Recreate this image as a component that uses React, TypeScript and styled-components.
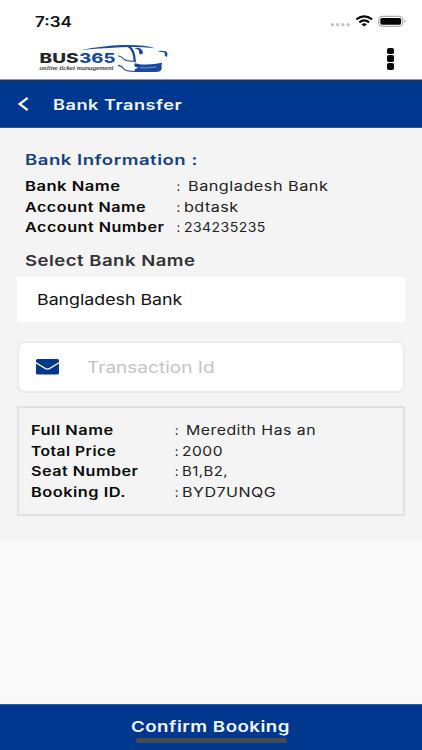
import React from "react";
import styled, { createGlobalStyle } from "styled-components";

const Global = createGlobalStyle`
  * { box-sizing: border-box; }
  body { margin: 0; background: #f9f9f9; font-family: Inter, "Open Sans", sans-serif; }
`;

const Screen = styled.div`
  width: 422px;
  height: 750px;
  display: flex;
  flex-direction: column;
  overflow: hidden;
  background: #f9f9f9;
`;

/* Extended letterforms: glyphs are widened horizontally from their left edge. */
const Wide = styled.span<{ $x: number; $ls?: number }>`
  display: inline-block;
  white-space: pre;
  letter-spacing: ${(p) => p.$ls ?? 0.4}px;
  transform: scaleX(${(p) => p.$x});
  transform-origin: 0 50%;
`;

const StatusBar = styled.div`
  height: 42px;
  flex: none;
  display: flex;
  justify-content: space-between;
  background: #fff;
  padding: 0 6px 0 34.5px;
`;
const Clock = styled.div`
  padding-top: 11.5px;
  font-size: 14px;
  line-height: 20px;
  font-weight: 600;
  color: #111;
`;
const Header = styled.header`
  height: 38px;
  flex: none;
  display: flex;
  justify-content: space-between;
  background: #fff;
  border-bottom: 1px solid #96989f;
  padding: 0 28px 0 38px;
`;
const MenuButton = styled.div`
  display: flex;
  flex-direction: column;
  gap: 1.6px;
  padding-top: 5.5px;
`;
const MenuDot = styled.i`
  width: 7.5px;
  height: 6.4px;
  border-radius: 1.8px;
  background: #080808;
`;
const TitleBar = styled.div`
  height: 48px;
  flex: none;
  display: flex;
  align-items: center;
  background: #003890;
  border-top: 1px solid #29303f;
  border-bottom: 1px solid #2d5294;
  color: #f4f6fa;
  padding-left: 17px;
  font-size: 14.3px;
  font-weight: 600;
`;
const BackIcon = styled.svg`
  width: 12px;
  height: 16px;
  margin-right: 24px;
`;
const Content = styled.main`
  height: 411px;
  flex: none;
  background: #f4f4f4;
  padding: 21px 17px 0;
`;
const SectionTitle = styled.h2`
  margin: 0 0 5px 8px;
  font-size: 14.5px;
  line-height: 22px;
  font-weight: 600;
  color: #153f88;
`;
const Details = styled.dl<{ $inset: number; $labels: number }>`
  margin: 0;
  padding-left: ${(p) => p.$inset}px;
  display: grid;
  grid-template-columns: ${(p) => p.$labels}px 1fr;
  grid-auto-rows: 20.6px;
  font-size: 13px;
  line-height: 20.6px;
`;
const Label = styled.dt`
  font-weight: 600;
  color: #090909;
`;
const Value = styled.dd`
  margin: 0;
  display: flex;
  color: #222;
`;
const Colon = styled.span<{ $gap: number }>`
  width: ${(p) => p.$gap}px;
  flex: none;
`;
const SelectTitle = styled.h3`
  margin: 12.7px 0 5px 8px;
  font-size: 15px;
  line-height: 22px;
  font-weight: 600;
  color: #333;
`;
const SelectBox = styled.div`
  height: 45px;
  display: flex;
  align-items: center;
  padding-left: 20px;
  background: #fff;
  font-size: 15px;
  color: #111;
`;
const InputBox = styled.div`
  height: 52px;
  margin: 18.5px 0 13.5px;
  display: flex;
  align-items: center;
  padding-left: 17px;
  border: 2px solid #ebebeb;
  border-radius: 8px;
  background: #fff;
  font-size: 16px;
  color: #c4c4c6;
`;
const MailIcon = styled.svg`
  width: 23px;
  height: 15.5px;
  margin-right: 28px;
`;
const Summary = styled.section`
  height: 109.5px;
  padding-top: 11.5px;
  border: 2px solid #e1e1e1;
`;
const Footer = styled.footer`
  height: 46px;
  flex: none;
  margin-top: auto;
  display: flex;
  flex-direction: column;
  background: #003890;
  border-top: 1px solid #2d5a9f;
  padding: 12px 0 0 131px;
  font-size: 15px;
  line-height: 20px;
  font-weight: 600;
  color: #f4f7fb;
`;
const HomeIndicator = styled.div`
  width: 151px;
  height: 4.5px;
  margin: 1px 0 0 5px;
  border-radius: 3px;
  background: #4a4a4d;
`;

const StatusIcons = () => (
  <svg width="90" height="42" viewBox="326 0 90 42">
    <g fill="#c5c5c5">
      <circle cx="332.5" cy="24.8" r="1.7" />
      <circle cx="337.7" cy="24.8" r="1.7" />
      <circle cx="342.9" cy="24.8" r="1.7" />
      <circle cx="348.1" cy="24.8" r="1.7" />
    </g>
    <g fill="none" stroke="#080808" strokeWidth="2.1">
      <path d="M356.3 19.3 Q364.2 13.5 372.1 19.3" />
      <path d="M359.3 22.3 Q364.2 18.6 369.1 22.3" />
    </g>
    <path d="M361.4 24.3 Q364.2 22.2 367 24.3 L364.2 26.6Z" fill="#080808" />
    <rect x="378.7" y="16.3" width="24" height="10" rx="3.2" fill="none" stroke="#999" />
    <rect x="380.3" y="17.9" width="20.8" height="6.9" rx="1.7" fill="#050505" />
    <path d="M404.4 19.6 Q406.5 21.3 404.4 23Z" fill="#999" />
  </svg>
);

const Logo = () => (
  <svg width="134" height="37" viewBox="38 42 134 37">
    <g fontFamily="Inter, sans-serif" fontWeight="800" fontSize="13.2">
      <text x="39.5" y="63" textLength="39" lengthAdjust="spacingAndGlyphs" fill="#242528">BUS</text>
      <text x="79.3" y="63" textLength="36" lengthAdjust="spacingAndGlyphs" fill="#174a9e">365</text>
    </g>
    <text x="39.5" y="69.8" textLength="74" lengthAdjust="spacingAndGlyphs" fontFamily="Liberation Serif, serif" fontStyle="italic" fontSize="6.2" fill="#33343a" stroke="#33343a" strokeWidth="0.15">
      online ticket management
    </text>
    <g fill="#174a9e">
      <path d="M81 50 Q103 45.8 122 45 Q144 44.4 155 48.2 Q141 46.8 131 47 Q112 47.4 81 50Z" />
      <path d="M126.5 46 L130.5 46.5 Q135 49.5 135.8 60 L136 62.5 L133.6 61.5 Q133.6 50.5 126.5 46Z" />
      <path d="M135 48 Q142.5 47 143 53.4 L140 54.6 Q138.6 53 139 50.4 Q138 49 135 48.6Z" />
      <path d="M158.5 51 Q166 50 167.5 53.2 L167 57 L164.8 55.8 V52.8 Q163 51.8 158.5 51.8Z" />
      <path d="M134.5 63.2 L141 64.4 Q152 65.2 162 62.8 L161.4 66.6 L162 67.6 L160.6 71 Q159 72 155 72 H135 L134.6 69.2 L138.5 67.8 L134.5 66.4Z" />
    </g>
    <path d="M140 67.8 Q149 68.2 156.5 66.9" fill="none" stroke="#9db6da" strokeWidth="0.7" />
    <g fill="none" stroke="#174a9e" strokeWidth="1.1">
      <path d="M118 55.8 Q121.5 56.3 123.8 59.2 Q126 61.2 133.8 61.4" />
      <path d="M118 65.4 Q122 65.8 123.6 68.8 Q125 71.4 135.5 71.5" />
    </g>
  </svg>
);

type Row = { label: string; lx: number; gap: number; value: string; vx: number };

const bankRows: Row[] = [
  { label: "Bank Name", lx: 1.275, gap: 11.3, value: "Bangladesh Bank", vx: 1.25 },
  { label: "Account Name", lx: 1.24, gap: 7, value: "bdtask", vx: 1.24 },
  { label: "Account Number", lx: 1.242, gap: 7, value: "234235235", vx: 1.08 },
];
const bookingRows: Row[] = [
  { label: "Full Name", lx: 1.26, gap: 11.3, value: "Meredith Has an", vx: 1.218 },
  { label: "Total Price", lx: 1.2, gap: 7, value: "2000", vx: 1.2 },
  { label: "Seat Number", lx: 1.243, gap: 7, value: "B1,B2,", vx: 1.147 },
  { label: "Booking ID.", lx: 1.258, gap: 7, value: "BYD7UNQG", vx: 1.235 },
];

const Rows = ({ rows, inset, labels }: { rows: Row[]; inset: number; labels: number }) => (
  <Details $inset={inset} $labels={labels}>
    {rows.map((r) => (
      <React.Fragment key={r.label}>
        <Label><Wide $x={r.lx}>{r.label}</Wide></Label>
        <Value>
          <Colon $gap={r.gap}>:</Colon>
          <Wide $x={r.vx}>{r.value}</Wide>
        </Value>
      </React.Fragment>
    ))}
  </Details>
);

export default function App() {
  return (
    <Screen>
      <Global />
      <StatusBar>
        <Clock><Wide $x={1.22} $ls={0}>7:34</Wide></Clock>
        <StatusIcons />
      </StatusBar>
      <Header>
        <Logo />
        <MenuButton><MenuDot /><MenuDot /><MenuDot /></MenuButton>
      </Header>
      <TitleBar>
        <BackIcon viewBox="0 0 12 16" fill="none" stroke="#f4f6fa" strokeWidth="2.3">
          <path d="M10.6 2 L2.6 8 L10.6 14" />
        </BackIcon>
        <Wide $x={1.27}>Bank Transfer</Wide>
      </TitleBar>
      <Content>
        <SectionTitle><Wide $x={1.28}>Bank Information :</Wide></SectionTitle>
        <Rows rows={bankRows} inset={7.5} labels={152} />
        <SelectTitle><Wide $x={1.235}>Select Bank Name</Wide></SelectTitle>
        <SelectBox><Wide $x={1.185} $ls={0}>Bangladesh Bank</Wide></SelectBox>
        <InputBox>
          <MailIcon viewBox="0 0 23 15.5" fill="#003890">
            <path d="M1.5 0 H21.5 Q23 0 23 1.5 V3 L14 8.5 Q11.5 10.3 9 8.5 L0 3 V1.5 Q0 0 1.5 0Z" />
            <path d="M0 4.4 L8.5 9.7 Q11.5 11.8 14.5 9.7 L23 4.4 V14 Q23 15.5 21.5 15.5 H1.5 Q0 15.5 0 14Z" />
          </MailIcon>
          <Wide $x={1.19} $ls={0}>Transaction Id</Wide>
        </InputBox>
        <Summary><Rows rows={bookingRows} inset={11.5} labels={144.3} /></Summary>
      </Content>
      <Footer>
        <div><Wide $x={1.244}>Confirm Booking</Wide></div>
        <HomeIndicator />
      </Footer>
    </Screen>
  );
}
